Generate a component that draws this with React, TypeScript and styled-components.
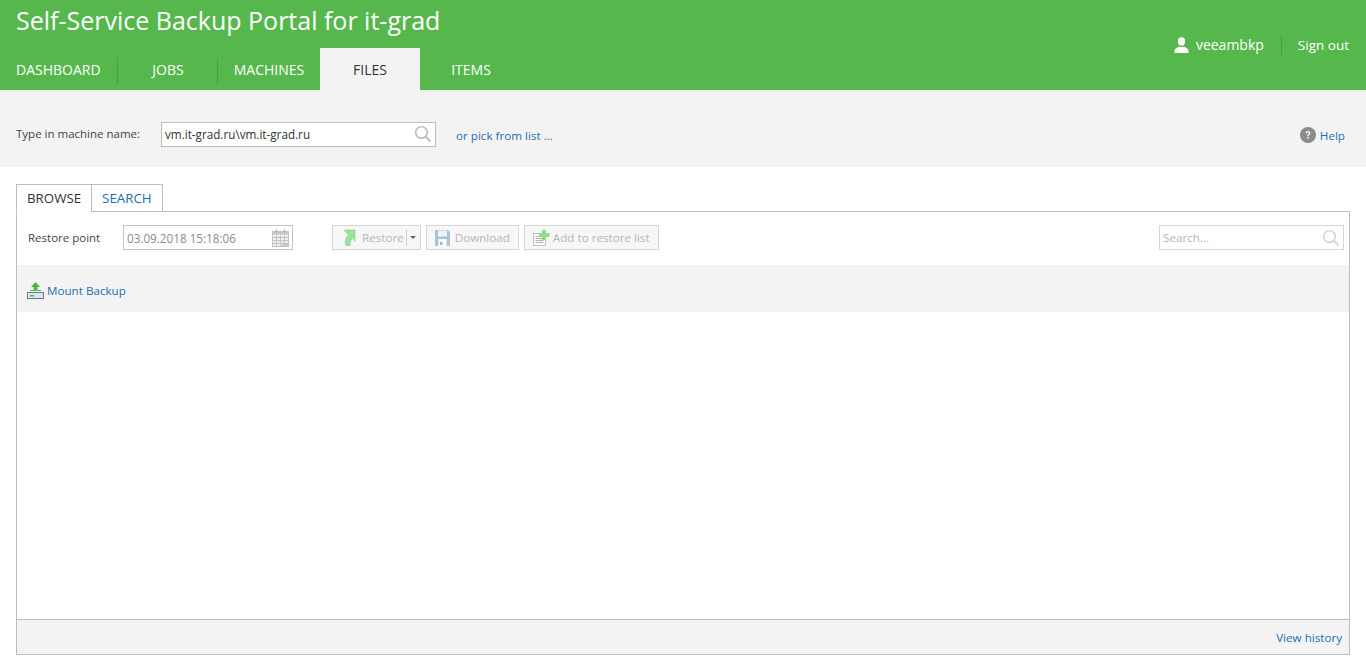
import React, { FC } from "react";
import styled, { createGlobalStyle } from "styled-components";

const GlobalStyle = createGlobalStyle`
  html, body {
    margin: 0;
    padding: 0;
    height: 100%;
    background: #fff;
    font-family: "Open Sans", "Noto Sans", sans-serif;
    font-size: 11.6px;
    color: #444;
    overflow: hidden;
  }
`;

const Page = styled.div`
  display: flex;
  flex-direction: column;
  height: 671px;
`;

const Header = styled.header`
  height: 90px;
  background: #56b84c;
  display: flex;
  justify-content: space-between;
  color: #fff;
`;

const HeaderLeft = styled.div`
  display: flex;
  flex-direction: column;
  justify-content: space-between;
`;

const Title = styled.h1`
  margin: 0;
  padding: 4px 0 0 16px;
  font-size: 25px;
  font-weight: 400;
  line-height: 33px;
`;

const Nav = styled.nav`
  display: flex;
  height: 42px;
`;

const NavTab = styled.a<{ $active?: boolean; $divider?: boolean; $width: number; $left?: boolean }>`
  box-sizing: border-box;
  width: ${({ $width }) => $width}px;
  padding: ${({ $left }) => ($left ? "1px 0 0 16px" : "1px 0 0")};
  display: flex;
  align-items: center;
  justify-content: ${({ $left }) => ($left ? "flex-start" : "center")};
  font-size: 14px;
  background: ${({ $active }) => ($active ? "#f3f3f3" : "transparent")};
  color: ${({ $active }) => ($active ? "#333" : "#fff")};
  position: relative;
  &::after {
    content: "";
    display: ${({ $divider }) => ($divider ? "block" : "none")};
    position: absolute;
    right: 0;
    top: 10px;
    height: 26px;
    width: 1px;
    background: #47a03e;
  }
`;

const UserBox = styled.div`
  display: flex;
  align-items: center;
  height: 20px;
  margin-top: 35px;
  padding-right: 17px;
  font-size: 14px;
`;

const UserName = styled.span`
  margin-left: 7px;
  padding-right: 17px;
  border-right: 1px solid #47a03e;
  line-height: 20px;
`;

const SignOut = styled.a`
  margin-left: 16px;
  font-size: 13.5px;
`;

const FilterBand = styled.section`
  height: 77px;
  box-sizing: border-box;
  background: #f3f3f3;
  display: flex;
  align-items: center;
  padding: 11px 21px 0 16px;
`;

const FieldLabel = styled.label`
  font-size: 11.5px;
  color: #444;
  width: 145px;
  flex: none;
  position: relative;
  top: -1px;
`;

const MachineInput = styled.div`
  box-sizing: border-box;
  width: 275px;
  height: 25px;
  border: 1px solid #bdbdbd;
  background: #fff;
  display: flex;
  align-items: center;
  justify-content: space-between;
  padding: 0 3px;
  font-size: 11.7px;
  color: #333;
`;

const Link = styled.a`
  color: #1a6eb5;
  font-size: 11.65px;
`;

const PickLink = styled(Link)`
  margin-left: 20px;
  position: relative;
  top: 1px;
`;

const HelpLink = styled(Link)`
  margin-left: auto;
  display: flex;
  align-items: center;
  gap: 4px;
  position: relative;
  top: 1px;
`;

const Main = styled.main`
  flex: 1;
  display: flex;
  flex-direction: column;
  padding: 17px 16px 16px;
  min-height: 0;
`;

const TabRow = styled.div`
  display: flex;
  height: 28px;
  margin-bottom: -1px;
  position: relative;
  z-index: 1;
`;

const ContentTab = styled.a<{ $active?: boolean }>`
  box-sizing: border-box;
  height: 28px;
  padding: 0 10px;
  display: flex;
  align-items: center;
  font-size: 13.3px;
  border: 1px solid #bdbdbd;
  margin-left: ${({ $active }) => ($active ? "0" : "-1px")};
  background: #fff;
  color: ${({ $active }) => ($active ? "#333" : "#1a6eb5")};
  border-bottom-color: ${({ $active }) => ($active ? "#fff" : "#bdbdbd")};
`;

const Panel = styled.div`
  flex: 1;
  display: flex;
  flex-direction: column;
  border: 1px solid #bdbdbd;
  min-height: 0;
`;

const Toolbar = styled.div`
  height: 53px;
  display: flex;
  align-items: center;
  padding: 0 5px 2px 11px;
  flex: none;
  box-sizing: border-box;
`;

const PointLabel = styled.span`
  width: 95px;
  flex: none;
  font-size: 11.5px;
  color: #444;
`;

const DateBox = styled.div`
  box-sizing: border-box;
  width: 170px;
  height: 25px;
  border: 1px solid #c4c4c4;
  display: flex;
  align-items: center;
  justify-content: space-between;
  padding: 0 3px;
  color: #8c8c8c;
  font-size: 11.7px;
  margin-right: 39px;
`;

const ToolButton = styled.div`
  box-sizing: border-box;
  height: 25px;
  display: flex;
  align-items: center;
  gap: 5px;
  padding: 0 8px;
  margin-right: 5px;
  border: 1px solid #d6d6d6;
  background: #f7f7f7;
  color: #b5b5b5;
  font-size: 11.65px;
`;

const RestoreButton = styled(ToolButton)`
  padding: 0 0 0 9px;
  gap: 6px;
`;

const AddButton = styled(ToolButton)`
  gap: 3px;
`;

const SplitCaret = styled.span`
  display: flex;
  align-items: center;
  justify-content: center;
  height: 17px;
  width: 13px;
  margin-left: -4px;
  border-left: 1px solid #cfcfcf;
  &::after {
    content: "";
    border-left: 3px solid transparent;
    border-right: 3px solid transparent;
    border-top: 3px solid #666;
  }
`;

const SearchBox = styled.div`
  box-sizing: border-box;
  margin-left: auto;
  width: 185px;
  height: 25px;
  border: 1px solid #d6d6d6;
  display: flex;
  align-items: center;
  justify-content: space-between;
  padding: 0 3px;
  color: #b5b5b5;
  font-size: 11.65px;
`;

const MountBar = styled.div`
  height: 47px;
  flex: none;
  background: #f3f3f3;
  display: flex;
  align-items: center;
  gap: 3px;
  padding: 3px 0 0 10px;
  box-sizing: border-box;
`;

const Body = styled.div`
  flex: 1;
  background: #fff;
`;

const Footer = styled.div`
  box-sizing: border-box;
  height: 35px;
  flex: none;
  background: #f3f3f3;
  border-top: 1px solid #bdbdbd;
  display: flex;
  align-items: center;
  justify-content: flex-end;
  padding-right: 7px;
`;

const SearchIcon: FC<{ color: string }> = ({ color }) => (
  <svg width="18" height="18" viewBox="0 0 18 18" fill="none">
    <circle cx="7.5" cy="7.5" r="5.8" stroke={color} strokeWidth="1.6" />
    <path d="M11.8 11.8L16.6 16.6" stroke={color} strokeWidth="2" />
  </svg>
);

const UserIcon: FC = () => (
  <svg width="15" height="16" viewBox="0 0 15 16" fill="#fff">
    <ellipse cx="7.5" cy="4.4" rx="3.6" ry="4.2" />
    <path d="M0.5 16V13.6C0.5 11.4 3.4 10.4 5.2 9.4C6.6 10.2 8.4 10.2 9.8 9.4C11.6 10.4 14.5 11.4 14.5 13.6V16Z" />
  </svg>
);

const HelpIcon: FC = () => (
  <svg width="16" height="16" viewBox="0 0 16 16">
    <circle cx="8" cy="8" r="8" fill="#8c8c8c" />
    <path d="M5.6 6.2C5.7 4.7 6.7 4 8 4C9.4 4 10.4 4.8 10.4 6C10.4 7.5 8.6 7.6 8.6 9.2H7.3C7.3 7.2 9 7.1 9 6.1C9 5.5 8.6 5.2 8 5.2C7.4 5.2 7 5.6 6.9 6.3Z" fill="#fff" />
    <rect x="7.2" y="10" width="1.5" height="1.6" fill="#fff" />
  </svg>
);

const CalendarIcon: FC = () => (
  <svg width="17" height="18" viewBox="0 0 17 18">
    <rect x="0.5" y="2.5" width="16" height="15" fill="#f0f0f0" stroke="#c4c4c4" />
    <rect x="0.5" y="2.5" width="16" height="3" fill="#c4c4c4" />
    <path d="M4.5 0.5V3M12.5 0.5V3" stroke="#b4b4b4" strokeWidth="1.4" />
    <path d="M4.5 5.5V17.5M8.5 5.5V17.5M12.5 5.5V17.5M0.5 8.5H16.5M0.5 11.5H16.5M0.5 14.5H16.5" stroke="#c4c4c4" />
    <rect x="10" y="14" width="6.5" height="3.5" fill="#c4c4c4" />
  </svg>
);

const RestoreIcon: FC = () => (
  <svg width="14" height="17" viewBox="0 0 14 17">
    <path d="M2 1H13V12L10.5 9.5C8.5 11 8 13 8 16.5H4C2.5 12 3.5 8.5 6.5 6L3.5 3Z" fill="#9be39a" stroke="#84d184" strokeWidth="0.6" />
  </svg>
);

const SaveIcon: FC = () => (
  <svg width="15" height="16" viewBox="0 0 15 16">
    <path d="M0 0H13L15 2V16H0Z" fill="#a9c4de" />
    <rect x="3" y="0.5" width="9" height="6" fill="#eef3f8" />
    <rect x="3.5" y="9" width="8" height="7" fill="#fff" />
    <rect x="5" y="12" width="2.5" height="3" fill="#7fd67a" />
  </svg>
);

const AddListIcon: FC = () => (
  <svg width="17" height="16" viewBox="0 0 17 16">
    <rect x="0.5" y="3.5" width="12" height="12" fill="#fff" stroke="#a9c4de" />
    <path d="M2.5 6.5H10.5M2.5 8.5H10.5M2.5 10.5H10.5M2.5 12.5H10.5" stroke="#c4a98f" />
    <path d="M9 0H13V3H16.5V7H13V10H9V7H6V3H9Z" fill="#8fdc8a" />
  </svg>
);

const MountIcon: FC = () => (
  <svg width="17" height="17" viewBox="0 0 17 17">
    <rect x="0.5" y="10.5" width="16" height="6" fill="#d6e8f5" stroke="#777" />
    <rect x="3" y="13" width="4" height="1.5" fill="#4fb54a" />
    <path d="M8.5 0L13 5H10.5V9H6.5V5H4Z" fill="#46b748" />
    <path d="M3 8.5H6.5M10.5 8.5H14" stroke="#46b748" strokeWidth="1" />
  </svg>
);

const App: FC = () => {
  return (
    <Page>
      <GlobalStyle />
      <Header>
        <HeaderLeft>
          <Title>Self-Service Backup Portal for it-grad</Title>
          <Nav>
            <NavTab $left $divider $width={118}>DASHBOARD</NavTab>
            <NavTab $divider $width={100}>JOBS</NavTab>
            <NavTab $width={102}>MACHINES</NavTab>
            <NavTab $active $width={100}>FILES</NavTab>
            <NavTab $width={102}>ITEMS</NavTab>
          </Nav>
        </HeaderLeft>
        <UserBox>
          <UserIcon />
          <UserName>veeambkp</UserName>
          <SignOut>Sign out</SignOut>
        </UserBox>
      </Header>
      <FilterBand>
        <FieldLabel>Type in machine name:</FieldLabel>
        <MachineInput>
          vm.it-grad.ru\vm.it-grad.ru
          <SearchIcon color="#bdbdbd" />
        </MachineInput>
        <PickLink>or pick from list ...</PickLink>
        <HelpLink>
          <HelpIcon />
          Help
        </HelpLink>
      </FilterBand>
      <Main>
        <TabRow>
          <ContentTab $active>BROWSE</ContentTab>
          <ContentTab>SEARCH</ContentTab>
        </TabRow>
        <Panel>
          <Toolbar>
            <PointLabel>Restore point</PointLabel>
            <DateBox>
              03.09.2018 15:18:06
              <CalendarIcon />
            </DateBox>
            <RestoreButton>
              <RestoreIcon />
              Restore
              <SplitCaret />
            </RestoreButton>
            <ToolButton>
              <SaveIcon />
              Download
            </ToolButton>
            <AddButton>
              <AddListIcon />
              Add to restore list
            </AddButton>
            <SearchBox>
              Search...
              <SearchIcon color="#d6d6d6" />
            </SearchBox>
          </Toolbar>
          <MountBar>
            <MountIcon />
            <Link>Mount Backup</Link>
          </MountBar>
          <Body />
          <Footer>
            <Link>View history</Link>
          </Footer>
        </Panel>
      </Main>
    </Page>
  );
};

export default App;
